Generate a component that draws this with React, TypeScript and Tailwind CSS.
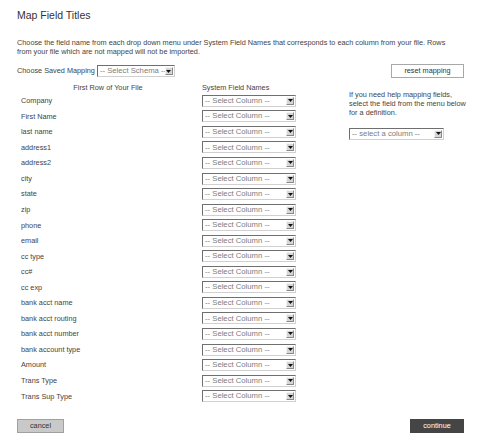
import React from "react";

const fields = [
  "Company",
  "First Name",
  "last name",
  "address1",
  "address2",
  "city",
  "state",
  "zip",
  "phone",
  "email",
  "cc type",
  "cc#",
  "cc exp",
  "bank acct name",
  "bank acct routing",
  "bank acct number",
  "bank account type",
  "Amount",
  "Trans Type",
  "Trans Sup Type",
];

function FakeSelect({ label, width }: { label: string; width: string }) {
  return (
    <div
      className={`flex h-[12px] items-stretch border border-t-[#6f6f6f] border-l-[#6f6f6f] border-b-[#d0d0d0] border-r-[#d0d0d0] bg-white ${width}`}
    >
      <span className="flex flex-1 items-center overflow-hidden whitespace-nowrap pl-[2px] text-[7.7px] leading-none text-[#7c7c7c]">
        {label}
      </span>
      <span className="my-[1px] mr-[1px] flex w-[8px] items-center justify-center border border-t-[#f4f4f4] border-l-[#f4f4f4] border-b-[#8a8a8a] border-r-[#8a8a8a] bg-[#d6d6d6]">
        <svg width="5" height="3" viewBox="0 0 5 3">
          <path d="M0 0 L5 0 L2.5 3Z" fill="#111" />
        </svg>
      </span>
    </div>
  );
}

export default function App() {
  return (
    <div
      className="w-[485px] h-[446px] bg-white pl-[17px] pr-[21px] pt-[8px] text-[#3a3a3a]"
      style={{ fontFamily: '"Liberation Sans", Arial, sans-serif' }}
    >
      <h1 className="text-[10.5px] leading-[14px] text-[#333]">Map Field Titles</h1>
      <p className="mt-[16px] text-[7.3px] leading-[9px] text-[#444]">
        Choose the field name from each drop down menu under System Field Names that corresponds to each column from your file. Rows
        <br />
        from your file which are not mapped will not be imported.
      </p>

      <div className="mt-[8px] flex h-[14px] items-center justify-between">
        <div className="flex items-center gap-[2px]">
          <span className="text-[7.3px] leading-none text-[#444]">Choose Saved Mapping</span>
          <FakeSelect label="-- Select Schema --" width="w-[78px]" />
        </div>
        <div className="flex h-[14px] w-[73px] items-center justify-center border border-[#a8a8a8] bg-white text-[7.3px] leading-none text-[#333]">
          reset mapping
        </div>
      </div>

      <div className="mt-[5px] flex">
        <div className="grid grid-cols-[182px_94px] gap-x-[3px]">
          <div className="h-[10px] text-center text-[7.3px] leading-[10px] text-[#444]">First Row of Your File</div>
          <div className="h-[10px] text-[7.3px] leading-[10px] text-[#444]">System Field Names</div>
          {fields.map((f) => (
            <React.Fragment key={f}>
              <div className="flex h-[15.55px] items-center pl-[4px] text-[7.3px] leading-none text-[#444]">{f}</div>
              <div className="flex h-[15.55px] items-center">
                <FakeSelect label="-- Select Column --" width="w-[94px]" />
              </div>
            </React.Fragment>
          ))}
        </div>
        <div className="ml-[53px] shrink-0 pt-[6.5px]">
          <p className="whitespace-nowrap text-[7.3px] leading-[9.3px] text-[#444]">
            If you need help mapping fields,
            <br />
            select the field from the menu below
            <br />
            for a definition.
          </p>
          <div className="mt-[10.5px]">
            <FakeSelect label="-- select a column --" width="w-[95px]" />
          </div>
        </div>
      </div>

      <div className="mt-[15px] flex items-center justify-between">
        <div className="flex h-[14px] w-[47px] items-center justify-center border border-[#a0a0a0] bg-[#c9c9c9] text-[7.3px] leading-none text-[#333]">
          cancel
        </div>
        <div className="flex h-[14px] w-[54px] items-center justify-center bg-[#454545] text-[7.3px] leading-none text-white">
          continue
        </div>
      </div>
    </div>
  );
}
